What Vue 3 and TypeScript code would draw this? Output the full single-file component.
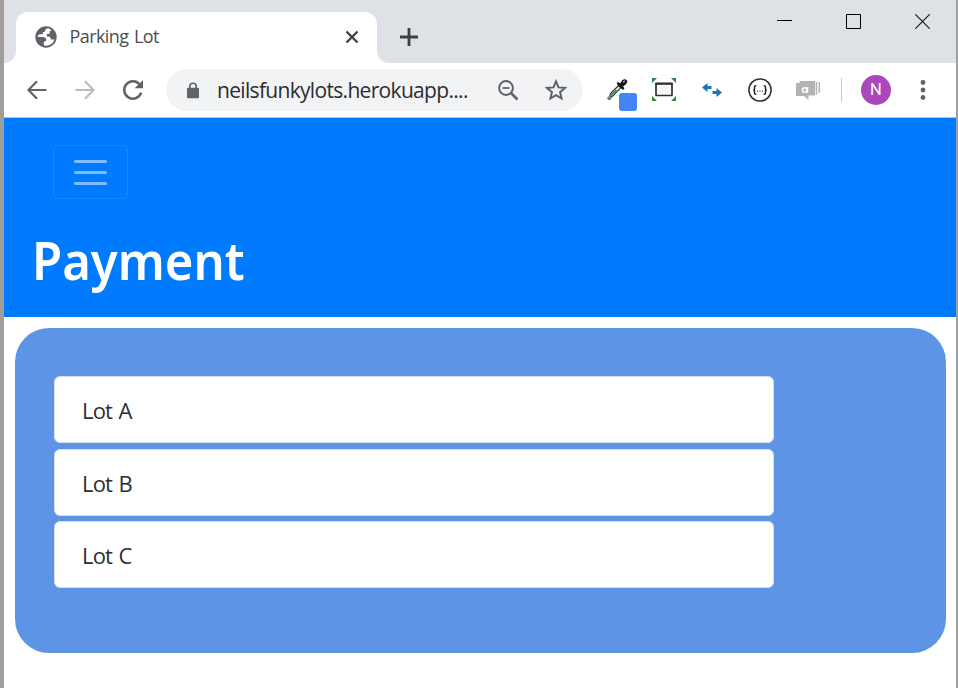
<script setup lang="ts">
const lots: string[] = ['Lot A', 'Lot B', 'Lot C']
</script>

<template>
  <div class="window">
    <header class="tabs">
      <span class="flare flare-left"></span>
      <div class="tab">
        <svg class="globe" width="24" height="24" viewBox="0 0 24 24">
          <circle cx="12" cy="12" r="10.7" fill="#5f6368" />
          <path d="M14 3.2C11.8 3.5 11 5 10.9 6.500C9.500 7 8.500 7.400 8.700 9.200L5.500 9.300L3.200 11.800L7.500 12C11 11.800 12.500 13 12.300 15.500L9.800 17L9.800 20.300C14.500 21.800 19.500 18.800 20.400 14.600L17.200 14.600L15.900 11.800L13 11.500L12.600 9.300L15.500 8.700L15.800 6.500L17.500 5.300Q16 3.900 14 3.200Z" fill="#fff" />
        </svg>
        <span class="tab-title">Parking Lot</span>
        <svg class="tab-close" width="14" height="14" viewBox="0 0 14 14">
          <path d="M1.500 1.500L12.500 12.500M12.500 1.500L1.500 12.500" stroke="#3c4043" stroke-width="2.300" />
        </svg>
      </div>
      <span class="flare flare-right"></span>
      <svg class="new-tab" width="18" height="18" viewBox="0 0 18 18">
        <path d="M9 0V18M0 9H18" stroke="#3c4043" stroke-width="2.800" />
      </svg>
      <div class="controls">
        <svg width="15" height="15" viewBox="0 0 15 15"><path d="M0 6.500H15" stroke="#000" /></svg>
        <svg width="15" height="15" viewBox="0 0 15 15"><path d="M.5 .5H14.500V14.500H.5Z" fill="none" stroke="#000" /></svg>
        <svg width="15" height="15" viewBox="0 0 15 15"><path d="M.3 .3L14.700 14.700M14.700 .3L.3 14.700" stroke="#111" stroke-width="1.100" /></svg>
      </div>
    </header>

    <div class="toolbar">
      <svg class="back" width="20" height="20" viewBox="0 0 20 20">
        <path d="M19.500 10H1.800M10 1.300L1.500 10L10 18.700" fill="none" stroke="#5f6368" stroke-width="2.200" />
      </svg>
      <svg class="forward" width="20" height="20" viewBox="0 0 20 20">
        <path d="M.5 10H18.200M10 1.300L18.500 10L10 18.700" fill="none" stroke="#babcbe" stroke-width="2.200" />
      </svg>
      <svg class="reload" width="22" height="22" viewBox="0 0 22 22">
        <path d="M17.500 5.200A8.700 8.700 0 1 0 19.200 13.700" fill="none" stroke="#5f6368" stroke-width="2.500" />
        <path d="M21 1V9.300H12.700Z" fill="#5f6368" />
      </svg>
      <div class="address">
        <svg class="lock" width="12" height="17" viewBox="0 0 12 17">
          <path d="M2.800 7V4.500A3.200 3.200 0 0 1 9.200 4.500V7" fill="none" stroke="#5f6368" stroke-width="1.600" />
          <rect x="0" y="5.700" width="12" height="10.500" rx="1.300" fill="#5f6368" />
        </svg>
        <span class="url">neilsfunkylots.herokuapp....</span>
        <svg class="zoom-out" width="21" height="21" viewBox="0 0 21 21">
          <circle cx="8" cy="8" r="6.900" fill="none" stroke="#5f6368" stroke-width="2" />
          <path d="M4.500 8H11.500" stroke="#5f6368" stroke-width="1.800" />
          <path d="M13 13L19.500 19.500" stroke="#5f6368" stroke-width="2.600" />
        </svg>
        <svg class="star" width="22" height="22" viewBox="0 0 22 22">
          <path d="M11 2.400L13.500 8.400L20 8.950L15.050 13.200L16.550 19.500L11 16.150L5.450 19.500L6.950 13.200L2 8.950L8.500 8.400Z" fill="none" stroke="#5f6368" stroke-width="2" />
        </svg>
      </div>
      <svg class="picker" width="31" height="34" viewBox="0 0 31 34">
        <path d="M3.300 21.500L4.500 16.500L12.500 8.500L14.800 10.800L7 18.800Z" fill="#dbe8df" stroke="#252b28" stroke-width="1.100" />
        <path d="M5.200 18.500L10.500 13.200" stroke="#4c8c60" stroke-width="1.800" />
        <path d="M12.200 6.500L17 11.300" stroke="#111" stroke-width="2.600" stroke-linecap="round" />
        <path d="M13.500 7.500L16.200 3.300Q18.800 1.200 20.700 3.100Q22.300 5.100 19.800 7.300L16.500 10Z" fill="#151515" />
        <path d="M17 5.200L19 3.700" stroke="#aaa" stroke-width="1.200" />
        <circle cx="3.300" cy="21.300" r="2" fill="#668c70" />
        <rect x="13" y="16" width="18" height="18" rx="3" fill="#4285f4" />
      </svg>
      <svg class="resizer" width="24" height="24" viewBox="0 0 24 24">
        <path d="M0 0H5L0 5ZM24 0H19L24 5ZM0 23V18L5 23ZM24 23V18L19 23Z" fill="#34843a" />
        <rect x="4" y="5.500" width="16" height="12" rx=".6" fill="#f7f7f7" stroke="#333" stroke-width="1.700" />
        <path d="M3.200 5.700H20.800" stroke="#333" stroke-width="2.200" />
      </svg>
      <svg class="swap" width="20" height="14" viewBox="0 0 20 14">
        <path d="M0 4.500L5.500 0V3H9.500V6H5.500V9ZM20 9.500L14.500 5V8H10.500V11H14.500V14Z" fill="#1b75bb" />
      </svg>
      <svg class="json" width="24" height="24" viewBox="0 0 24 24">
        <circle cx="12" cy="12" r="11.100" fill="#fff" stroke="#333" stroke-width="1.500" />
        <path d="M8.300 7.700Q6.500 7.500 6.500 9.200V10.700Q6.500 12 5.200 12Q6.500 12 6.500 13.300V14.800Q6.500 16.500 8.300 16.300M15.700 7.700Q17.500 7.500 17.500 9.200V10.700Q17.500 12 18.800 12Q17.500 12 17.500 13.300V14.800Q17.500 16.500 15.700 16.300" fill="none" stroke="#222" stroke-width="1.500" />
        <path d="M9 13.200H10M11.500 13.200H12.500M14 13.200H15" stroke="#333" stroke-width="1.200" />
      </svg>
      <svg class="chat" width="25" height="21" viewBox="0 0 25 21">
        <path d="M3.500 1H19V15.500H12.500V20L8 16H0V3H3.500Z" fill="#b3b3b3" />
        <path d="M19.700 2H21.200V14.500H19.700ZM22.500 2H24V13H22.500Z" fill="#b3b3b3" />
        <circle cx="8.700" cy="10" r="2.300" fill="none" stroke="#fff" stroke-width="1.500" />
        <path d="M11.500 7V13" stroke="#fff" stroke-width="1.400" />
      </svg>
      <span class="divider"></span>
      <span class="avatar">N</span>
      <svg class="more" width="6" height="20" viewBox="0 0 6 20">
        <g fill="#5f6368"><circle cx="3" cy="2.500" r="2.400" /><circle cx="3" cy="10" r="2.400" /><circle cx="3" cy="17.500" r="2.400" /></g>
      </svg>
    </div>

    <section class="hero">
      <button class="menu" type="button" aria-label="Menu">
        <span></span><span></span><span></span>
      </button>
      <h1>Payment</h1>
    </section>

    <main class="panel">
      <div v-for="lot in lots" :key="lot" class="lot"><span>{{ lot }}</span></div>
    </main>
  </div>
</template>

<style>
body { margin: 0; background: #fff; }
</style>

<style scoped>
.window {
  box-sizing: border-box;
  height: 688px;
  border-left: 4px solid #a09d9b;
  border-right: 2px solid #9d9f9e;
  background: #fff;
  overflow: hidden;
  font-family: "Open Sans", "Noto Sans", sans-serif;
}
svg { display: block; flex: none; }
.tabs { display: flex; height: 63px; background: #dee1e6; }
.flare { width: 12px; height: 12px; align-self: flex-end; flex: none; }
.flare-left { background: radial-gradient(circle at 0 0, transparent 11.5px, #fff 12.5px); }
.flare-right { background: radial-gradient(circle at 100% 0, transparent 11.5px, #fff 12.5px); }
.tab {
  box-sizing: border-box;
  display: flex;
  align-items: center;
  width: 361px;
  height: 51px;
  margin-top: 12px;
  padding: 0 18px 0 18px;
  border-radius: 12px 12px 0 0;
  background: #fff;
}
.tab .globe { margin-top: -1px; }
.tab-title { margin-left: 11.5px; margin-top: -3px; font-size: 18px; line-height: 24px; letter-spacing: -0.6px; word-spacing: 1.5px; color: #4a4e52; white-space: nowrap; }
.tab-close { margin-left: auto; margin-top: -1px; }
.new-tab { margin: 28px 0 0 11px; }
.controls { display: flex; gap: 54px; margin: 14px 26px 0 auto; }
.toolbar {
  box-sizing: border-box;
  display: flex;
  align-items: center;
  height: 55px;
  padding-left: 23px;
  border-bottom: 1px solid #b5bfcc;
}
.back, .forward, .reload { margin-top: -1px; }
.forward { margin-left: 28px; }
.reload { margin-left: 27px; }
.address {
  box-sizing: border-box;
  display: flex;
  align-items: center;
  width: 417px;
  height: 42px;
  margin-left: 22px;
  padding-left: 21px;
  border-radius: 21px;
  background: #f1f3f4;
}
.url { width: 263px; margin: -1px 0 0 18px; font-size: 21px; line-height: 28px; letter-spacing: -0.68px; color: #2b2d30; white-space: nowrap; }
.zoom-out { margin-left: 18px; }
.star { margin-left: 26px; }
.picker { margin: 8px 0 0 23px; }
.resizer { margin-left: 15px; }
.swap { margin-left: 26px; }
.json { margin-left: 26px; }
.chat { margin-left: 24px; }
.divider { width: 1px; height: 24px; margin-left: 20px; background: #c7cacd; }
.avatar {
  width: 30px;
  height: 30px;
  margin-left: 19px;
  border-radius: 50%;
  background: #ab47bc;
  color: #fff;
  font: 16.5px/30px Roboto, sans-serif;
  text-align: center;
}
.more { margin-left: 29px; }
.hero { box-sizing: border-box; height: 199px; padding: 27px 0 0 29px; background: #007bff; }
.menu {
  box-sizing: border-box;
  display: flex;
  flex-direction: column;
  align-items: center;
  justify-content: center;
  gap: 8px;
  width: 75px;
  height: 54px;
  margin: 0 0 0 20px;
  padding: 0;
  border: 1px solid #1989ff;
  border-radius: 5px;
  background: transparent;
}
.menu span { width: 33px; height: 3px; border-radius: 1.5px; background: #80bdff; }
h1 { margin: 26px 0 0 -1.5px; font-family: "Noto Sans", "Open Sans", sans-serif; font-size: 53px; line-height: 70px; font-weight: 600; transform: scaleX(0.925); transform-origin: left; color: #fff; }
.panel {
  box-sizing: border-box;
  display: flex;
  flex-direction: column;
  gap: 5.5px;
  height: 325px;
  margin: 11px 10px 0 11px;
  padding: 48px 0 0 39px;
  border-radius: 34px;
  background: #5e94e6;
}
.lot {
  box-sizing: border-box;
  width: 720px;
  height: 67px;
  padding: 18px 27px;
  border: 1px solid #d4dfef;
  border-radius: 6px;
  background: #fff;
  font-size: 22px;
  line-height: 30px;
  letter-spacing: -0.8px;
  word-spacing: 1.5px;
  color: #2b2f33;
}
</style>
